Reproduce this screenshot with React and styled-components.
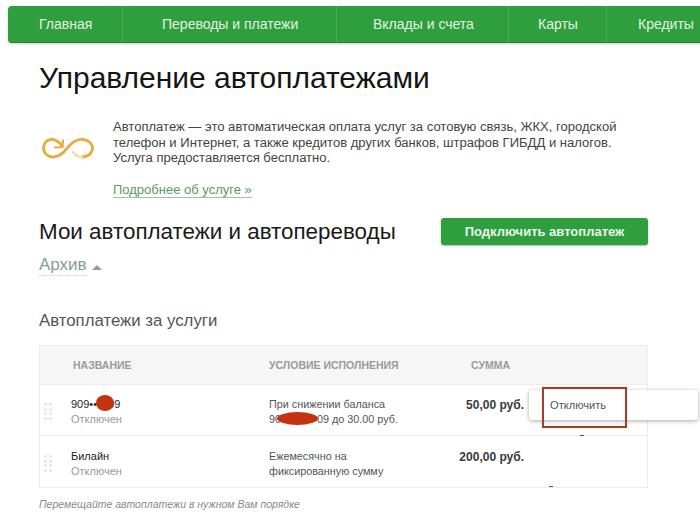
import styled, { createGlobalStyle } from "styled-components";

const GlobalStyle = createGlobalStyle`
  html, body {
    margin: 0;
    padding: 0;
    background: #fff;
  }
  body {
    width: 700px;
    height: 522px;
    overflow: hidden;
    font-family: "Liberation Sans", Arial, sans-serif;
  }
`;

const menu = [
  { label: "Главная", width: 115, left: 31 },
  { label: "Переводы и платежи", width: 214, left: 39 },
  { label: "Вклады и счета", width: 172, left: 36 },
  { label: "Карты", width: 98, left: 29 },
  { label: "Кредиты", width: 110, left: 31 },
];

const rows = [
  {
    name: "909••",
    nameEnd: "09",
    condition: ["При снижении баланса", "90", "09 до 30.00 руб."],
    sum: "50,00 руб.",
  },
  {
    name: "Билайн",
    condition: ["Ежемесячно на", "фиксированную сумму"],
    sum: "200,00 руб.",
  },
];

function InfinityIcon() {
  return (
    <svg width="52" height="22" viewBox="0 0 52 22" fill="none">
      <path
        d="M20 9 C 17 4, 12 2, 9 2.5 C 4 3, 1.5 7, 1.5 11 C 1.5 16, 6 20.5, 12 20 C 20 19.5, 24 12, 28 8 C 32 4, 37 2, 41 2.5 C 47 3, 50.5 7, 50.5 11 C 50.5 16, 46 20, 40 20"
        stroke="#e8ab42"
        strokeWidth="2.8"
        strokeLinecap="round"
      />
      <path
        d="M40 20 C 36 20, 33 18, 31 15"
        stroke="#f3dcae"
        strokeWidth="2.4"
        strokeLinecap="round"
      />
      <path
        d="M13 10.5 L20.5 10 L21 3.5"
        stroke="#e8ab42"
        strokeWidth="2.2"
        strokeLinecap="round"
        strokeLinejoin="round"
      />
    </svg>
  );
}

export default function App() {
  return (
    <Page>
      <GlobalStyle />
      <Nav>
        {menu.map((item) => (
          <NavItem key={item.label} $width={item.width} $left={item.left}>
            {item.label}
          </NavItem>
        ))}
      </Nav>
      <Content>
        <Title>Управление автоплатежами</Title>
        <Intro>
          <IconBox>
            <InfinityIcon />
          </IconBox>
          <div>
            <IntroText>
              Автоплатеж — это автоматическая оплата услуг за сотовую связь,
              ЖКХ, городской
              <br />
              телефон и Интернет, а также кредитов других банков, штрафов ГИБДД
              и налогов.
              <br />
              Услуга предоставляется бесплатно.
            </IntroText>
            <MoreLink>Подробнее об услуге »</MoreLink>
          </div>
        </Intro>
        <HeadRow>
          <Subtitle>Мои автоплатежи и автопереводы</Subtitle>
          <ConnectButton>Подключить автоплатеж</ConnectButton>
        </HeadRow>
        <Archive>
          <ArchiveLabel>Архив</ArchiveLabel>
          <ArchiveArrow />
        </Archive>
        <SectionTitle>Автоплатежи за услуги</SectionTitle>
        <Table>
          <HeaderRow>
            <HeaderName>НАЗВАНИЕ</HeaderName>
            <HeaderCond>УСЛОВИЕ ИСПОЛНЕНИЯ</HeaderCond>
            <HeaderSum>СУММА</HeaderSum>
          </HeaderRow>
          {rows.map((row, i) => (
            <Row key={row.name} $last={i === rows.length - 1}>
              <Handle>
                {Array.from({ length: 8 }).map((_, k) => (
                  <Dot key={k} />
                ))}
              </Handle>
              <NameCell>
                <Name>
                  {row.name}
                  {row.nameEnd && (
                    <>
                      <NameGap>
                        <NameBlob />
                      </NameGap>
                      {row.nameEnd}
                    </>
                  )}
                </Name>
                <Status>Отключен</Status>
              </NameCell>
              <CondCell>
                {row.condition[0]}
                <br />
                {row.condition.length > 2 ? (
                  <>
                    {row.condition[1]}
                    <CondGap>
                      <CondBlob />
                    </CondGap>
                    {row.condition[2]}
                  </>
                ) : (
                  row.condition[1]
                )}
              </CondCell>
              <SumCell>{row.sum}</SumCell>
            </Row>
          ))}
          <Popup>
            Отключить
            <Highlight />
          </Popup>
          <Speck $left={540} $top={89} />
          <Speck $left={509} $top={140} />
        </Table>
        <Hint>Перемещайте автоплатежи в нужном Вам порядке</Hint>
      </Content>
    </Page>
  );
}

const Page = styled.div`
  width: 700px;
  height: 522px;
  overflow: hidden;
  padding-top: 6px;
  box-sizing: border-box;
`;

const Nav = styled.div`
  display: flex;
  width: 709px;
  height: 37px;
  box-sizing: border-box;
  margin-left: 8px;
  background: #2e9f3c;
  border-bottom: 1px solid #2a7f37;
  border-radius: 4px;
  box-shadow: 0 1px 3px rgba(0, 0, 0, 0.2);
`;

const NavItem = styled.div`
  width: ${(p) => p.$width}px;
  flex: none;
  box-sizing: border-box;
  padding-left: ${(p) => p.$left}px;
  line-height: 36px;
  font-size: 14px;
  color: #e3f3e2;
  white-space: nowrap;
  border-right: 1px solid #49ab55;
  &:last-child {
    border-right: none;
  }
`;

const Content = styled.div`
  padding-left: 39px;
  width: 609px;
  position: relative;
`;

const Title = styled.h1`
  margin: 17px 0 0;
  font-size: 30px;
  line-height: 36px;
  font-weight: 400;
  color: #151515;
  white-space: nowrap;
`;

const Intro = styled.div`
  display: flex;
  margin-top: 23px;
`;

const IconBox = styled.div`
  width: 74px;
  flex: none;
  padding: 18px 0 0 3px;
  box-sizing: border-box;
`;

const IntroText = styled.p`
  margin: 0;
  font-size: 13.05px;
  line-height: 15.7px;
  color: #444;
  white-space: nowrap;
`;

const MoreLink = styled.a`
  display: inline-block;
  margin-top: 16px;
  font-size: 13px;
  line-height: 15px;
  color: #5d9a63;
  border-bottom: 1px solid #9cc4a0;
`;

const HeadRow = styled.div`
  display: flex;
  justify-content: space-between;
  align-items: flex-start;
  margin-top: 19px;
`;

const Subtitle = styled.h2`
  margin: 0;
  font-size: 22.4px;
  line-height: 30px;
  font-weight: 400;
  color: #1a1a1a;
  white-space: nowrap;
`;

const ConnectButton = styled.button`
  width: 207px;
  height: 27px;
  margin-top: 1px;
  border: none;
  border-radius: 3px;
  background: #2e9f3c;
  box-shadow: 0 1px 2px rgba(0, 0, 0, 0.3);
  color: #eaf6e9;
  font-family: inherit;
  font-size: 13px;
  font-weight: 700;
  padding: 0;
`;

const Archive = styled.div`
  display: flex;
  align-items: center;
  gap: 5px;
  margin-top: 8px;
  font-size: 17px;
  line-height: 22px;
  color: #7f9f98;
`;

const ArchiveLabel = styled.span`
  border-bottom: 1px dotted #c4d4cf;
  line-height: 20px;
`;

const ArchiveArrow = styled.span`
  width: 0;
  height: 0;
  margin-top: 3px;
  border-left: 5px solid transparent;
  border-right: 5px solid transparent;
  border-bottom: 5px solid #9a9a9a;
`;

const SectionTitle = styled.h3`
  margin: 34px 0 0;
  font-size: 16.8px;
  line-height: 22px;
  font-weight: 400;
  color: #555;
`;

const Table = styled.div`
  position: relative;
  margin-top: 13px;
  border: 1px solid #ededed;
  box-sizing: border-box;
`;

const HeaderRow = styled.div`
  display: flex;
  height: 38px;
  align-items: center;
  background: #f6f6f6;
  font-size: 10.5px;
  font-weight: 700;
  color: #9a9a9a;
  white-space: nowrap;
`;

const HeaderName = styled.div`
  width: 229px;
  padding-left: 33px;
  box-sizing: border-box;
  flex: none;
`;

const HeaderCond = styled.div`
  width: 202px;
  flex: none;
`;

const HeaderSum = styled.div``;

const Row = styled.div`
  display: flex;
  height: ${(p) => (p.$last ? 52 : 51)}px;
  box-sizing: border-box;
  border-top: 1px solid #ececec;
  padding-top: ${(p) => (p.$last ? 13 : 12)}px;
  white-space: nowrap;
`;

const Handle = styled.div`
  display: grid;
  grid-template-columns: 3px 3px;
  grid-auto-rows: 3px;
  gap: 1.5px 2px;
  width: 8px;
  margin: 6px 19px 0 4px;
  flex: none;
`;

const Dot = styled.span`
  background: #ebebeb;
`;

const NameCell = styled.div`
  width: 198px;
  flex: none;
  font-size: 11px;
  line-height: 14.5px;
`;

const Name = styled.div`
  color: #222;
`;

const NameGap = styled.span`
  position: relative;
  display: inline-block;
  width: 11px;
`;

const NameBlob = styled.span`
  position: absolute;
  left: -1px;
  top: -13px;
  width: 18px;
  height: 16px;
  border-radius: 50%;
  background: #c53210;
  filter: blur(0.5px);
`;

const Status = styled.div`
  color: #9a9a9a;
`;

const CondCell = styled.div`
  width: 160px;
  flex: none;
  font-size: 10.8px;
  line-height: 14.5px;
  color: #555;
`;

const CondGap = styled.span`
  position: relative;
  display: inline-block;
  width: 36px;
`;

const CondBlob = styled.span`
  position: absolute;
  left: -4px;
  top: -11px;
  width: 41px;
  height: 13px;
  border-radius: 50%;
  background: #c53210;
  filter: blur(0.5px);
`;

const SumCell = styled.div`
  width: 95px;
  flex: none;
  padding-top: 1px;
  text-align: right;
  font-size: 12px;
  line-height: 14px;
  font-weight: 700;
  color: #3a3a3a;
`;

const Popup = styled.div`
  position: absolute;
  left: 489px;
  top: 44px;
  width: 169px;
  height: 30px;
  box-sizing: border-box;
  padding-left: 21px;
  background: #fff;
  border-radius: 3px;
  box-shadow: 0 1px 4px rgba(0, 0, 0, 0.35);
  font-size: 11.1px;
  line-height: 30px;
  color: #555;
`;

const Highlight = styled.span`
  position: absolute;
  left: 13px;
  top: -3px;
  width: 85px;
  height: 41px;
  box-sizing: border-box;
  border: 2px solid #a04028;
  box-shadow: 0 0 1px rgba(160, 110, 60, 0.6);
`;

const Speck = styled.span`
  position: absolute;
  left: ${(p) => p.$left}px;
  top: ${(p) => p.$top}px;
  width: 4px;
  height: 1px;
  background: #555;
`;

const Hint = styled.div`
  margin-top: 9px;
  font-size: 10.5px;
  line-height: 14px;
  font-style: italic;
  color: #8a8a8a;
`;
